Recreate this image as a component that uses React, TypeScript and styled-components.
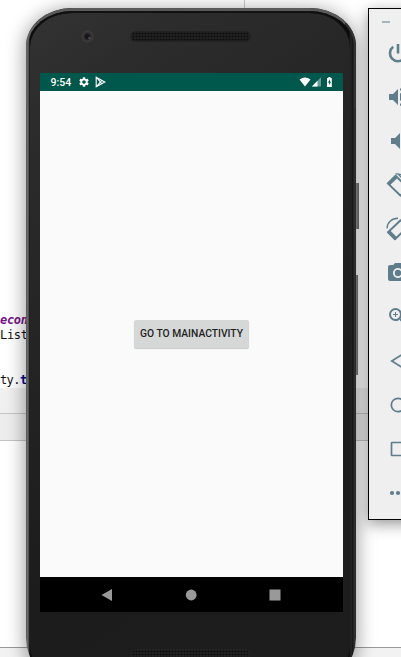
import React from 'react';
import styled, { createGlobalStyle } from 'styled-components';
import { MdVolumeUp, MdVolumeDown, MdPhotoCamera, MdZoomIn, MdSettings } from 'react-icons/md';

const GlobalStyle = createGlobalStyle`
  body { margin: 0; background: #fff; overflow: hidden; }
  * { box-sizing: border-box; }
  svg { display: block; flex: none; overflow: visible; }
`;

const Desktop = styled.div`
  position: relative;
  width: 401px;
  height: 657px;
  overflow: hidden;
  background: #fff;
`;

const Editor = styled.div`
  display: flex;
  flex-direction: column;
  height: 657px;
`;

const TabGutter = styled.div`
  flex: none;
  height: 10px;
  margin-left: 244px;
  border-left: 1px solid #c9c9c9;
`;

const Code = styled.div`
  flex: none;
  height: 378px;
  padding-top: 303px;
  font: 12px/15px 'DejaVu Sans Mono', monospace;
  letter-spacing: -0.3px;
  color: #111;
  white-space: pre;
`;

const Line = styled.div<{ $spacing?: number }>`
  height: 15px;
  letter-spacing: ${(p) => p.$spacing ?? -0.3}px;
`;

const Field = styled.span`
  color: #74158a;
  font-weight: bold;
  font-style: italic;
`;

const Keyword = styled.span`
  color: #000090;
  font-weight: bold;
`;

const Strip = styled.div<{ $height: number; $color: string; $line: string }>`
  flex: none;
  height: ${(p) => p.$height}px;
  background: ${(p) => p.$color};
  border-bottom: 1px solid ${(p) => p.$line};
`;

const Phone = styled.div`
  position: absolute;
  left: 26px;
  top: 8px;
  width: 330px;
  height: 674px;
  border-radius: 46px 46px 42px 42px / 38px 38px 44px 44px;
  background: linear-gradient(90deg, #555 0, #707070 2px, #333 3px, #0c0c0c 4px, #0c0c0c 323px, #272727 325px, #141414 327px, #353335 328px, #282628 330px);
  box-shadow: 0 3px 18px 2px rgba(0, 0, 0, 0.36);
`;

const Bezel = styled.div`
  position: relative;
  display: flex;
  flex-direction: column;
  height: 100%;
  margin: 0 6px 0 4px;
  padding: 60px 7px 0 10px;
  border-top: 2px solid #111;
  border-radius: 42px 40px 36px 36px / 36px 36px 38px 38px;
  background: linear-gradient(145deg, #333 0, #2c2c2c 12%, #242424 38%, #1c1c1c 65%, #1d1d1d 100%);
  background-clip: padding-box;
`;

const Shell = styled.div`
  height: 100%;
  padding-top: 3px;
`;

const TopRim = styled.div`
  position: absolute;
  left: 0;
  top: 0;
  width: 330px;
  height: 100px;
  border-style: solid;
  border-width: 3px 2px 0 2px;
  border-color: #5a5a5a #353335 transparent #626262;
  border-radius: 46px 46px 0 0 / 38px 38px 0 0;
`;

const Hardware = styled.div<{ $top: number; $left: number }>`
  position: absolute;
  top: ${(p) => p.$top}px;
  left: ${(p) => p.$left}px;
`;

const Speaker = styled.div`
  width: 121px;
  height: 11px;
  border-radius: 6px;
  border: 1px solid #222;
  background: radial-gradient(circle, #0d0d0d 0.7px, #202020 1.2px) 1px 0 / 3px 3px;
`;

const Lens = styled.div`
  width: 13px;
  height: 13px;
  border-radius: 50%;
  background: radial-gradient(circle at 65% 62%, #6b5563 0, rgba(40, 34, 42, 0) 1.8px), radial-gradient(circle, #17151b 2px, #343436 4px, #3a3a3a 5px, #363636 6px, transparent 7px);
`;

const SideKey = styled.div<{ $top: number; $height: number; $width: number }>`
  position: absolute;
  left: 356px;
  top: ${(p) => p.$top}px;
  width: ${(p) => p.$width}px;
  height: ${(p) => p.$height}px;
  background: linear-gradient(90deg, #777, #555);
`;

const StatusBar = styled.div`
  display: flex;
  align-items: center;
  height: 18px;
  padding: 0 10px;
  background: #00574b;
  color: #fff;
  font: 500 10.5px/18px Roboto, sans-serif;
`;

const Clock = styled.span`
  width: 28px;
  padding: 1px 0 0 0.5px;
`;

const StatusIcons = styled.div`
  display: flex;
  align-items: center;
  gap: 5px;
  flex: 1;
`;

const Screen = styled.div`
  width: 303px;
  height: 539px;
  flex: none;
`;

const Activity = styled.div`
  display: flex;
  align-items: center;
  justify-content: center;
  height: 486px;
  background: #fafafa;
`;

const ActionButton = styled.button`
  width: 115px;
  height: 28px;
  padding: 0;
  border: 0;
  border-radius: 2px;
  background: #d6d7d7;
  box-shadow: 0 1px 1px rgba(0, 0, 0, 0.2);
  color: #1f1f1f;
  font: 500 10.3px/28px Roboto, sans-serif;
  white-space: nowrap;
`;

const NavBar = styled.div`
  display: flex;
  align-items: center;
  justify-content: space-between;
  height: 35px;
  padding: 0 62px 0 61px;
  background: #000;
`;

const Controls = styled.div`
  position: absolute;
  left: 368px;
  top: 8px;
  width: 60px;
  height: 512px;
  border: 1px solid #000;
  background: #efefef;
  box-shadow: 0 4px 14px rgba(0, 0, 0, 0.42);
  color: #607d8b;
`;

const Minimize = styled.div`
  width: 8px;
  height: 2px;
  margin: 12px 0 8px 13px;
  background: #a3b5be;
`;

const Control = styled.div`
  display: flex;
  align-items: center;
  justify-content: center;
  height: 44px;
`;

const stroke = { fill: 'none', stroke: 'currentColor', strokeWidth: 2 };

const Power = () => (
  <svg width="24" height="24" viewBox="0 0 24 24" {...stroke} strokeWidth="2.6">
    <path d="M12 3v9.5M7.2 5.8a8 8 0 1 0 9.6 0" />
  </svg>
);

const RotateLeft = () => (
  <svg width="24" height="24" viewBox="0 0 24 24" {...stroke}>
    <path d="M1.8 10.4 9.6 2.8 22 15.2l-7.6 7.4z" strokeWidth="2" strokeLinejoin="round" />
    <path d="M2.8 11.2 10.4 3.8" strokeWidth="3.2" />
    <path d="M9.5 1C16 .4 21 4 22.5 10M12 1l4 4" strokeWidth="1.3" />
  </svg>
);

const RotateRight = () => (
  <svg width="24" height="24" viewBox="0 0 24 24" {...stroke}>
    <path d="M14.6 3.2 2 15.2l7 7L21.8 10z" strokeWidth="2" strokeLinejoin="round" />
    <path d="M2.8 14.4 9.8 21.4" strokeWidth="3.2" />
    <path d="M1 11.5C1.2 5.5 5.5 1.5 12 1.3" strokeWidth="1.4" />
  </svg>
);

const Back = () => (
  <svg width="24" height="24" viewBox="0 0 24 24" {...stroke}>
    <path d="M18 4.5 5.8 12 18 19.5z" strokeWidth="1.7" />
  </svg>
);

const Home = () => (
  <svg width="24" height="24" viewBox="0 0 24 24" {...stroke}>
    <circle cx="12" cy="12" r="6.7" strokeWidth="1.7" />
  </svg>
);

const Overview = () => (
  <svg width="24" height="24" viewBox="0 0 24 24" {...stroke}>
    <rect x="5.5" y="5.5" width="13" height="13" rx=".5" strokeWidth="1.7" />
  </svg>
);

const More = () => (
  <svg width="24" height="24" viewBox="0 0 24 24" fill="currentColor">
    <circle cx="6" cy="12" r="2.1" />
    <circle cx="12" cy="12" r="2.1" />
    <circle cx="18" cy="12" r="2.1" />
  </svg>
);

const controls = [
  <Power />,
  <MdVolumeUp size={24} />,
  <MdVolumeDown size={24} />,
  <RotateLeft />,
  <RotateRight />,
  <MdPhotoCamera size={24} />,
  <MdZoomIn size={24} />,
  <Back />,
  <Home />,
  <Overview />,
  <More />,
];

export default function App() {
  return (
    <Desktop>
      <GlobalStyle />
      <Editor>
        <TabGutter />
        <Code>
          <Line><Field>econ</Field></Line>
          <Line>List</Line>
          <Line />
          <Line />
          <Line $spacing={-0.6}>ty.<Keyword>t</Keyword></Line>
        </Code>
        <Strip $height={26} $color="#f0f0f0" $line="#c5c5c5" />
        <Strip $height={27} $color="#ededed" $line="#c5c5c5" />
        <Strip $height={207} $color="#fff" $line="#999" />
        <Strip $height={10} $color="#f2f2f2" $line="#f2f2f2" />
      </Editor>
      <Phone>
        <TopRim />
        <Shell>
          <Bezel>
            <Hardware $top={17} $left={51}><Lens /></Hardware>
            <Hardware $top={18} $left={100}><Speaker /></Hardware>
            <Hardware $top={636} $left={100}><Speaker /></Hardware>
            <Screen>
              <StatusBar>
                <Clock>9:54</Clock>
                <StatusIcons>
                  <MdSettings size={12} />
                  <svg width="11" height="12" viewBox="0 0 11 12" fill="none" stroke="#fff" strokeWidth="1.1">
                    <path d="M1.2 1.2 9.8 6 1.2 10.8zM1.2 1.2 6.8 7.6M1.2 10.8l5.6-6.4" />
                  </svg>
                </StatusIcons>
                <svg width="34" height="12" viewBox="0 0 34 12" fill="#fff">
                  <path d="M.5 3.6Q6-.6 11.5 3.6L6 10.4z" />
                  <path d="M22 1.2v9.2h-9.2z" opacity=".4" />
                  <path d="M18.5 4.7v5.7h-5.7z" />
                  <path d="M28 2h1.3V1h2.2v1h1.3v9H28z" />
                  <path d="M31 3.2 28.9 6.6h1.3v2.6l1.9-3.5H31z" fill="#00574b" />
                </svg>
              </StatusBar>
              <Activity>
                <ActionButton>GO TO MAINACTIVITY</ActionButton>
              </Activity>
              <NavBar>
                <svg width="12" height="12" viewBox="0 0 12 12" fill="#999"><path d="M11 0v12L.5 6z" /></svg>
                <svg width="12" height="12" viewBox="0 0 12 12" fill="#999"><circle cx="6.2" cy="6" r="5.4" /></svg>
                <svg width="12" height="12" viewBox="0 0 12 12" fill="#999"><rect x=".5" y=".5" width="11" height="11" /></svg>
              </NavBar>
            </Screen>
          </Bezel>
        </Shell>
      </Phone>
      <SideKey $top={183} $height={46} $width={3} />
      <SideKey $top={275} $height={100} $width={2} />
      <Controls>
        <Minimize />
        {controls.map((icon, i) => (
          <Control key={i}>{icon}</Control>
        ))}
      </Controls>
    </Desktop>
  );
}
